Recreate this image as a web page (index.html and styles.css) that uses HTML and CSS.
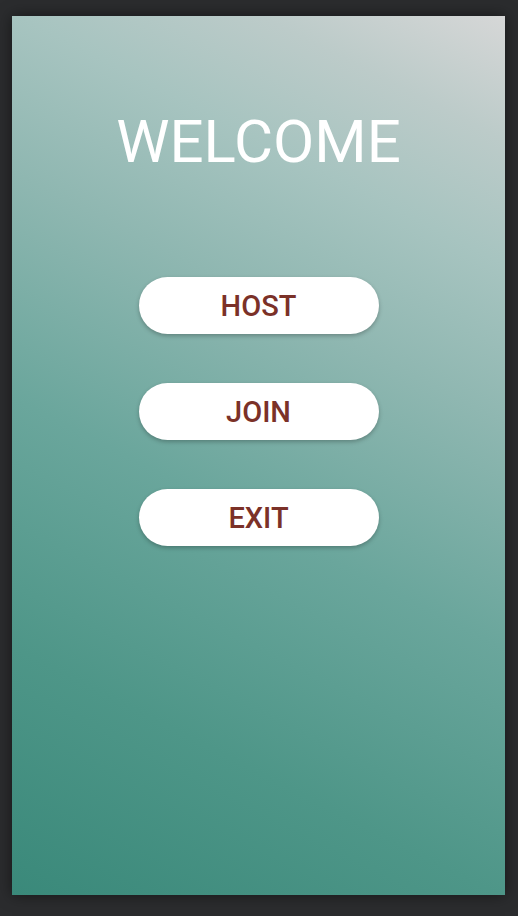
FILE: index.html
```html
<!DOCTYPE html>
<html>
<head>
<meta charset="utf-8">
<link rel="stylesheet" href="styles.css">
</head>
<body>
<div class="screen">
  <h1 class="title">WELCOME</h1>
  <div class="buttons">
    <button class="btn">HOST</button>
    <button class="btn">JOIN</button>
    <button class="btn">EXIT</button>
  </div>
</div>
</body>
</html>
```
FILE: styles.css
```css
html, body {
  margin: 0;
  padding: 0;
  background: #2b2c2e;
  width: 518px;
  height: 916px;
  overflow: hidden;
}
body {
  padding: 16px 13px 21px 12px;
  box-sizing: border-box;
}
.screen {
  width: 493px;
  height: 879px;
  background: linear-gradient(27deg, #3a897a 0%, #4e9688 22%, #6aa69c 44%, #8fb7b1 64%, #a7c4c0 78%, #bccbc9 89%, #d6d7d7 100%);
  box-shadow: 0 0 14px rgba(0,0,0,0.5);
  display: flex;
  flex-direction: column;
  align-items: center;
  font-family: Roboto, "Noto Sans", sans-serif;
}
.title {
  margin: 90px 0 0 0;
  font-weight: 400;
  font-size: 60px;
  line-height: 72px;
  color: #ffffff;
  letter-spacing: 0;
}
.buttons {
  margin-top: 99px;
  display: flex;
  flex-direction: column;
  gap: 49px;
}
.btn {
  width: 240px;
  height: 57px;
  border: none;
  border-radius: 29px;
  background: #ffffff;
  color: #7b3128;
  font-family: Roboto, "Noto Sans", sans-serif;
  font-weight: 500;
  font-size: 29px;
  padding: 0;
  box-shadow: 0 2px 4px rgba(0,0,0,0.25);
}
```
